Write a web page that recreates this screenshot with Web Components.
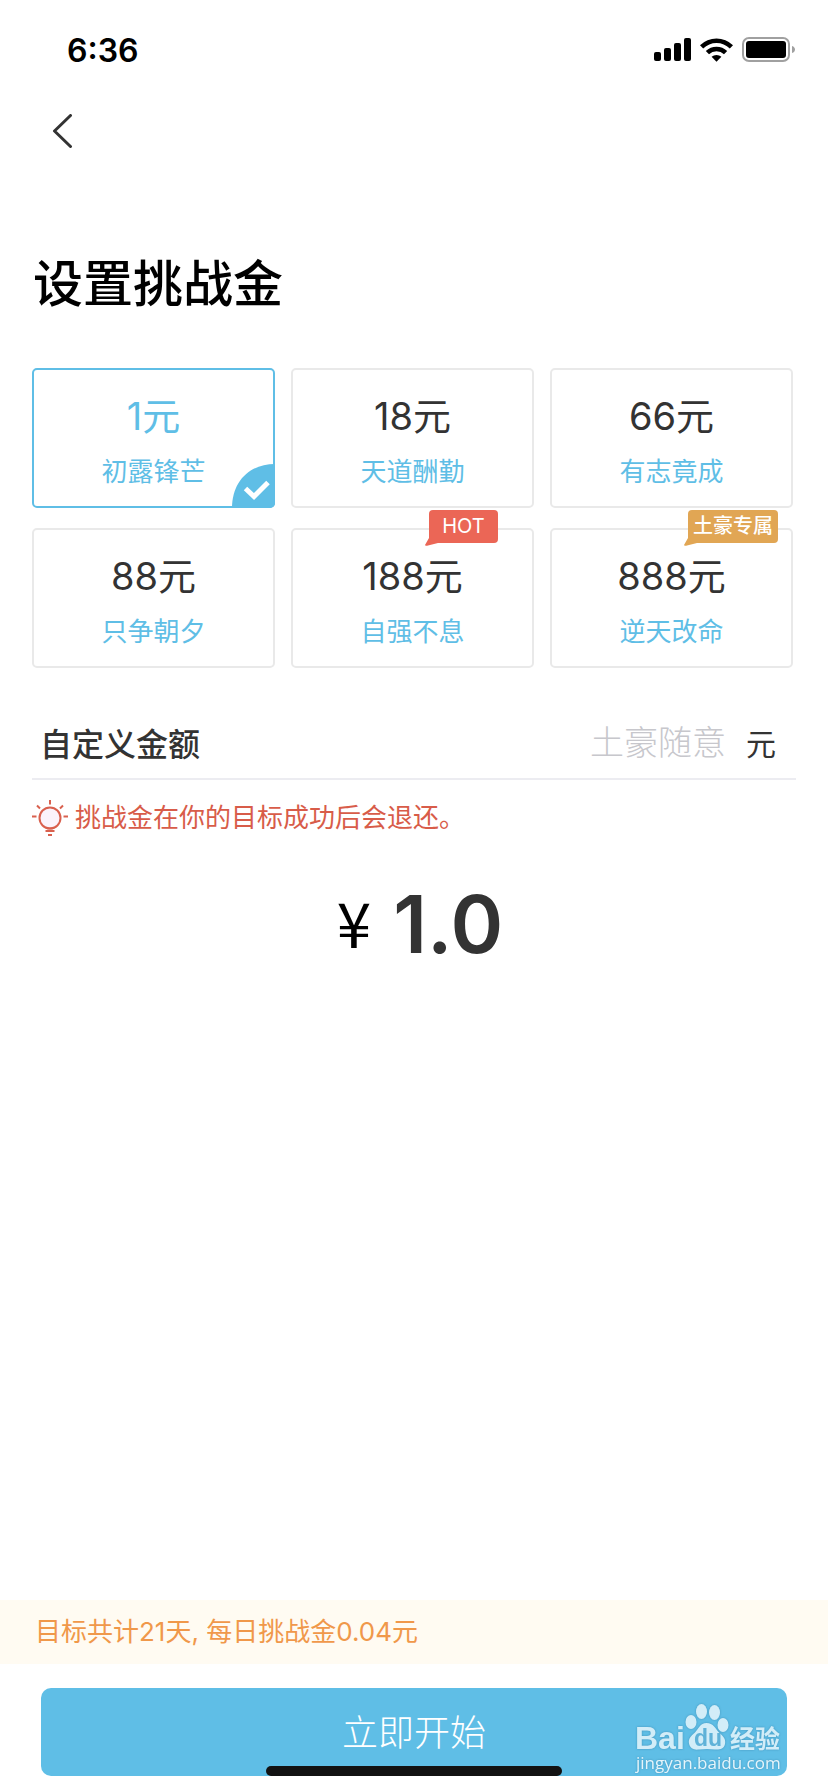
<!DOCTYPE html>
<html lang="zh-CN">
<head>
<meta charset="utf-8">
<meta name="viewport" content="width=device-width, initial-scale=1">
<title>设置挑战金</title>
<style>
    body {
        margin: 0;
        background: #fff;
        color: #333;
        font-family: Inter, "Noto Sans CJK SC", sans-serif;
        --blue: #5fbee6;
    }
</style>
</head>
<body>
<challenge-page>
    <status-bar slot="top">6:36</status-bar>
    <nav-bar slot="top"></nav-bar>
    <h1 slot="title">设置挑战金</h1>
    <amount-grid>
        <amount-card value="1" selected>初露锋芒</amount-card>
        <amount-card value="18">天道酬勤</amount-card>
        <amount-card value="66">有志竟成</amount-card>
        <amount-card value="88">只争朝夕</amount-card>
        <amount-card value="188">自强不息<card-badge slot="badge">HOT</card-badge></amount-card>
        <amount-card value="888">逆天改命<card-badge slot="badge" kind="gold">土豪专属</card-badge></amount-card>
    </amount-grid>
    <custom-amount placeholder="土豪随意">自定义金额</custom-amount>
    <tip-line>挑战金在你的目标成功后会退还。</tip-line>
    <total-amount value="1"></total-amount>
    <action-footer slot="footer" days="21">立即开始<site-mark slot="mark"></site-mark></action-footer>
</challenge-page>

<script>
class ChallengePage extends HTMLElement {
    constructor() {
        super();
        this._root = this.attachShadow({ mode: "open" });
        this._root.innerHTML = `
            <style>
                :host {
                    display: flex;
                    flex-direction: column;
                    min-height: 100vh;
                }
                main {
                    flex: 1;
                    padding: 92px 32px 40px;
                }
                ::slotted(h1) {
                    margin: 0 0 54px;
                    padding-left: 1px;
                    color: #000;
                    font-size: 50px;
                    font-weight: 500;
                    line-height: 60px;
                }
            </style>
            <slot name="top"></slot>
            <main>
                <slot name="title"></slot>
                <slot></slot>
            </main>
            <slot name="footer"></slot>
        `;
    }
    connectedCallback() {
        this.addEventListener("amount-change", (e) => {
            this.querySelector("total-amount").setAttribute("value", e.detail);
            this.querySelector("action-footer").setAttribute("total", e.detail);
        });
    }
}

class StatusBar extends HTMLElement {
    constructor() {
        super();
        this._root = this.attachShadow({ mode: "open" });
        this._root.innerHTML = `
            <style>
                :host {
                    display: flex;
                    align-items: center;
                    justify-content: space-between;
                    height: 100px;
                    padding: 0 33px 0 67px;
                    color: #000;
                    font-size: 32px;
                    font-weight: 600;
                }
                .icons {
                    display: flex;
                    align-items: center;
                    gap: 9px;
                }
                svg { display: block; }
            </style>
            <span><slot></slot></span>
            <div class="icons">
                <svg width="37" height="24" viewBox="0 0 37 24">
                    <rect x="0" y="14" width="7" height="9" rx="2"/>
                    <rect x="10" y="10" width="7" height="13" rx="2"/>
                    <rect x="20" y="5" width="7" height="18" rx="2"/>
                    <rect x="30" y="0" width="7" height="23" rx="2"/>
                </svg>
                <svg width="33" height="24" viewBox="0 0 33 24">
                    <path d="M0 7.2a23.5 23.5 0 0 1 33 0l-3.2 3.3a19 19 0 0 0-26.6 0z"/>
                    <path d="M5.8 13a15.3 15.3 0 0 1 21.4 0l-3.2 3.3a10.8 10.8 0 0 0-15 0z"/>
                    <path d="M11.6 18.8a7.2 7.2 0 0 1 9.8 0l-4.9 5z"/>
                </svg>
                <svg width="53" height="26" viewBox="0 0 53 26">
                    <rect x="1" y="1" width="46" height="23" rx="6" fill="none" stroke="#a0a0a0" stroke-width="2"/>
                    <rect x="4" y="4" width="40" height="17" rx="3"/>
                    <path d="M50 9c4 1 4 6 0 7z" fill="#a0a0a0"/>
                </svg>
            </div>
        `;
    }
}

class NavBar extends HTMLElement {
    constructor() {
        super();
        this._root = this.attachShadow({ mode: "open" });
        this._root.innerHTML = `
            <style>
                :host { display: flex; padding: 0 40px; }
                button {
                    padding: 14px 12px;
                    border: 0;
                    background: none;
                    cursor: pointer;
                }
                svg { display: block; }
            </style>
            <button type="button" aria-label="返回">
                <svg width="22" height="34" viewBox="0 0 22 34" fill="none" stroke="#333" stroke-width="3" stroke-linecap="round" stroke-linejoin="round">
                    <path d="M18.5 1.5L2.5 17l16 15.5"/>
                </svg>
            </button>
        `;
    }
}

class AmountGrid extends HTMLElement {
    constructor() {
        super();
        this._root = this.attachShadow({ mode: "open" });
        this._root.innerHTML = `
            <style>
                :host {
                    display: grid;
                    grid-template-columns: repeat(3, 1fr);
                    gap: 20px 16px;
                    padding-right: 3px;
                }
            </style>
            <slot></slot>
        `;
    }
    connectedCallback() {
        this.addEventListener("card-pick", (e) => {
            this.querySelectorAll("amount-card").forEach((card) => {
                card.toggleAttribute("selected", card === e.target);
            });
            this.dispatchEvent(new CustomEvent("amount-change", {
                detail: e.target.getAttribute("value"),
                bubbles: true,
            }));
        });
    }
}

class AmountCard extends HTMLElement {
    static get observedAttributes() {
        return ["selected"];
    }
    constructor() {
        super();
        this._root = this.attachShadow({ mode: "open" });
        this._root.innerHTML = `
            <style>
                :host { display: block; position: relative; }
                button {
                    display: flex;
                    flex-direction: column;
                    align-items: center;
                    gap: 14px;
                    box-sizing: border-box;
                    width: 100%;
                    height: 140px;
                    padding: 22px 0 0;
                    border: 2px solid #e9e9e9;
                    border-radius: 5px;
                    background: #fff;
                    color: #333;
                    font: inherit;
                    cursor: pointer;
                }
                .value { font-size: 38px; line-height: 48px; }
                .label { color: var(--blue); font-size: 26px; line-height: 36px; }
                .tick {
                    display: none;
                    position: absolute;
                    right: 0;
                    bottom: 0;
                }
                :host([selected]) button { border-color: var(--blue); color: var(--blue); }
                :host([selected]) .tick { display: block; }
                ::slotted(card-badge) {
                    position: absolute;
                    left: 138px;
                    top: -18px;
                }
            </style>
            <button type="button">
                <span class="value"></span>
                <span class="label"><slot></slot></span>
            </button>
            <svg class="tick" width="43" height="44" viewBox="0 0 43 44">
                <path d="M43 0v39a5 5 0 0 1-5 5H0C0 18 17 0 43 0z" fill="#5fbee6"/>
                <path d="M13.5 24.5l8.5 8L36 18.5" fill="none" stroke="#fff" stroke-width="5"/>
            </svg>
            <slot name="badge"></slot>
        `;
        this._button = this._root.querySelector("button");
    }
    connectedCallback() {
        this._root.querySelector(".value").textContent = this.getAttribute("value") + "元";
        this._button.setAttribute("aria-pressed", this.hasAttribute("selected"));
        this._button.addEventListener("click", () => {
            this.dispatchEvent(new CustomEvent("card-pick", { bubbles: true }));
        });
    }
    attributeChangedCallback() {
        this._button.setAttribute("aria-pressed", this.hasAttribute("selected"));
    }
}

class CardBadge extends HTMLElement {
    constructor() {
        super();
        this._root = this.attachShadow({ mode: "open" });
        this._root.innerHTML = `
            <style>
                :host {
                    --badge: #eb6656;
                    box-sizing: border-box;
                    min-width: 69px;
                    height: 33px;
                    padding: 0 5px;
                    border-radius: 4px;
                    background: var(--badge);
                    color: #fff;
                    font-size: 20px;
                    line-height: 33px;
                    text-align: center;
                    white-space: nowrap;
                    pointer-events: none;
                }
                :host([kind="gold"]) {
                    --badge: #e1a654;
                    font-weight: 500;
                }
                svg {
                    position: absolute;
                    left: -4px;
                    bottom: -3px;
                    fill: var(--badge);
                }
            </style>
            <svg width="16" height="10" viewBox="0 0 16 10"><path d="M4 0v2L0 9q0 1 2 .7L13 7h3V0z"/></svg>
            <slot></slot>
        `;
    }
}

class CustomAmount extends HTMLElement {
    constructor() {
        super();
        this._root = this.attachShadow({ mode: "open" });
        this._root.innerHTML = `
            <style>
                :host {
                    display: flex;
                    align-items: center;
                    gap: 20px;
                    height: 68px;
                    margin-top: 40px;
                    padding: 0 20px 2px 8px;
                    border-bottom: 2px solid #ececf1;
                }
                label { font-size: 32px; font-weight: 500; }
                input {
                    flex: 1;
                    min-width: 0;
                    padding: 0;
                    border: 0;
                    outline: 0;
                    background: none;
                    color: #333;
                    font: inherit;
                    font-size: 34px;
                    text-align: right;
                }
                input::placeholder { color: #c7c7cc; font-weight: 300; opacity: 1; }
                .unit { font-size: 30px; }
            </style>
            <label for="amount"><slot></slot></label>
            <input id="amount" type="text" inputmode="decimal">
            <span class="unit">元</span>
        `;
    }
    connectedCallback() {
        const input = this._root.querySelector("input");
        input.placeholder = this.getAttribute("placeholder");
        input.addEventListener("input", () => {
            this.dispatchEvent(new CustomEvent("amount-change", {
                detail: input.value || "1",
                bubbles: true,
            }));
        });
    }
}

class TipLine extends HTMLElement {
    constructor() {
        super();
        this._root = this.attachShadow({ mode: "open" });
        this._root.innerHTML = `
            <style>
                :host {
                    display: flex;
                    align-items: center;
                    gap: 7px;
                    margin-top: 20px;
                    color: #d85c49;
                    font-size: 26px;
                    line-height: 36px;
                }
                svg { flex: none; }
            </style>
            <svg width="36" height="36" viewBox="0 0 36 36" fill="none" stroke="#d9604e" stroke-width="2">
                <circle cx="18" cy="18" r="10.5" fill="#fbf3fb"/>
                <path d="M18 0v4.5M5 5.5l3 3M31 5.5l-3 3M0 16.5h4.5M31.5 16.5H36M13.5 31h9M16 35h4"/>
                <path d="M14 27.5q4 2 8 0"/>
            </svg>
            <span><slot></slot></span>
        `;
    }
}

class TotalAmount extends HTMLElement {
    static get observedAttributes() {
        return ["value"];
    }
    constructor() {
        super();
        this._root = this.attachShadow({ mode: "open" });
        this._root.innerHTML = `
            <style>
                :host {
                    display: flex;
                    justify-content: center;
                    align-items: center;
                    gap: 22px;
                    margin-top: 40px;
                    padding-left: 12px;
                    line-height: 96px;
                }
                .sign {
                    padding-bottom: 6px;
                    color: #000;
                    font-family: "Noto Sans CJK SC", sans-serif;
                    font-size: 62px;
                    line-height: 90px;
                }
                .value { font-size: 80px; font-weight: 600; }
            </style>
            <span class="sign">¥</span>
            <span class="value"></span>
        `;
    }
    attributeChangedCallback(name, old, value) {
        this._root.querySelector(".value").textContent = Number(value).toFixed(1);
    }
}

class ActionFooter extends HTMLElement {
    static get observedAttributes() {
        return ["total"];
    }
    constructor() {
        super();
        this._root = this.attachShadow({ mode: "open" });
        this._root.innerHTML = `
            <style>
                :host { display: block; }
                p {
                    margin: 0;
                    padding: 0 35px;
                    background: #fffbf2;
                    color: #f0984a;
                    font-size: 26px;
                    line-height: 64px;
                }
                .bar { position: relative; padding: 24px 41px 16px; }
                button {
                    display: block;
                    width: 100%;
                    height: 88px;
                    padding: 0 0 4px;
                    border: 0;
                    border-radius: 10px;
                    background: var(--blue);
                    color: #fff;
                    font: inherit;
                    font-size: 36px;
                    font-weight: 300;
                    cursor: pointer;
                }
                .home {
                    position: absolute;
                    left: 50%;
                    bottom: 16px;
                    width: 296px;
                    height: 10px;
                    margin-left: -148px;
                    border-radius: 5px;
                    background: #121212;
                }
                ::slotted(site-mark) {
                    position: absolute;
                    right: 43px;
                    bottom: 16px;
                }
            </style>
            <p></p>
            <div class="bar">
                <button type="button"><slot></slot></button>
                <slot name="mark"></slot>
                <div class="home"></div>
            </div>
        `;
    }
    connectedCallback() {
        this.render();
    }
    attributeChangedCallback() {
        this.render();
    }
    render() {
        const days = Number(this.getAttribute("days"));
        const total = Number(this.getAttribute("total") || 1);
        // the daily share is cut to cents, not rounded
        const daily = (Math.floor(total / days * 100) / 100).toFixed(2);
        this._root.querySelector("p").textContent = `目标共计${days}天, 每日挑战金${daily}元`;
    }
}

class SiteMark extends HTMLElement {
    constructor() {
        super();
        this._root = this.attachShadow({ mode: "open" });
        this._root.innerHTML = `
            <style>
                :host { display: block; pointer-events: none; }
                svg { display: block; filter: drop-shadow(0 0 1px rgba(40, 110, 150, .5)); }
                text { fill: #d2edf8; }
                .name { font: 700 32px "Liberation Sans", sans-serif; }
                .cn { font: 700 25px "Noto Sans CJK SC", sans-serif; }
                .du { font: 700 23px "Liberation Sans", sans-serif; fill: #5fb2d8; }
                .url { font: 400 17px "Open Sans", sans-serif; fill: #e6f5fb; }
            </style>
            <svg width="150" height="74" viewBox="0 0 150 74">
                <g fill="#d2edf8">
                    <ellipse cx="56" cy="20" rx="5.5" ry="7"/>
                    <ellipse cx="66.5" cy="9.5" rx="5.5" ry="7.5"/>
                    <ellipse cx="79.5" cy="10.5" rx="5.5" ry="7.5"/>
                    <ellipse cx="88" cy="23" rx="5.5" ry="7"/>
                    <path d="M71.5 21c7 0 9 6 13 10 4 3.5 6.5 6 5.5 11-1 5-6 6-10 5.500-6-.7-10-.7-16 0-5 .7-9-1-10-6-.8-5 2-7.5 6-11 3.5-3.5 5-9.5 11.5-9.5z"/>
                </g>
                <text class="name" x="0" y="47">Bai</text>
                <text class="du" x="59" y="44">du</text>
                <text class="cn" x="95" y="46">经验</text>
                <text class="url" x="1" y="67">jingyan.baidu.com</text>
            </svg>
        `;
    }
}

customElements.define("challenge-page", ChallengePage);
customElements.define("status-bar", StatusBar);
customElements.define("nav-bar", NavBar);
customElements.define("amount-grid", AmountGrid);
customElements.define("amount-card", AmountCard);
customElements.define("card-badge", CardBadge);
customElements.define("custom-amount", CustomAmount);
customElements.define("tip-line", TipLine);
customElements.define("total-amount", TotalAmount);
customElements.define("action-footer", ActionFooter);
customElements.define("site-mark", SiteMark);
</script>
</body>
</html>
